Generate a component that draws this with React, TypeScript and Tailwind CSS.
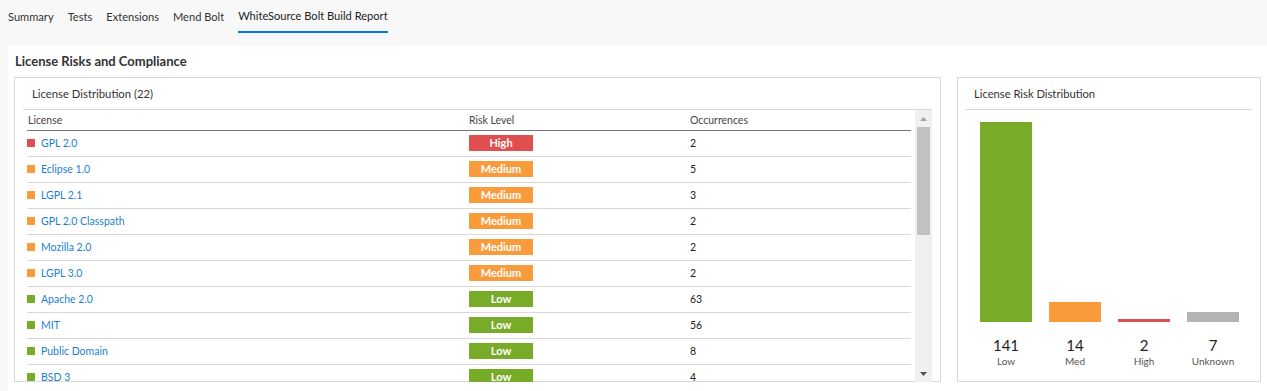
const rows = [
  { name: "GPL 2.0", risk: "High", count: 2 },
  { name: "Eclipse 1.0", risk: "Medium", count: 5 },
  { name: "LGPL 2.1", risk: "Medium", count: 3 },
  { name: "GPL 2.0 Classpath", risk: "Medium", count: 2 },
  { name: "Mozilla 2.0", risk: "Medium", count: 2 },
  { name: "LGPL 3.0", risk: "Medium", count: 2 },
  { name: "Apache 2.0", risk: "Low", count: 63 },
  { name: "MIT", risk: "Low", count: 56 },
  { name: "Public Domain", risk: "Low", count: 8 },
  { name: "BSD 3", risk: "Low", count: 4 },
];

const riskColor: Record<string, string> = {
  High: "bg-[#e04f4f]",
  Medium: "bg-[#f99b3a]",
  Low: "bg-[#78ac28]",
};

const bars = [
  { value: 141, label: "Low", h: "h-[200px]", color: "bg-[#78ac28]" },
  { value: 14, label: "Med", h: "h-[20px]", color: "bg-[#f99b3a]" },
  { value: 2, label: "High", h: "h-[3px]", color: "bg-[#e04f4f]" },
  { value: 7, label: "Unknown", h: "h-[10px]", color: "bg-[#b3b3b3]" },
];

const tabs = ["Summary", "Tests", "Extensions", "Mend Bolt", "WhiteSource Bolt Build Report"];

function LicenseTable() {
  return (
    <div className="flex h-[272px]">
      <div className="flex-1 overflow-hidden pl-[4px] pr-[4px]">
        <table className="w-[884px] border-collapse text-[10.5px]">
          <thead>
            <tr className="border-b border-[#767676] text-[#444] text-left">
              <th className="font-normal h-[20px] pt-[2px] pl-[1px] w-[442px]">License</th>
              <th className="font-normal pt-[2px] w-[221px]">Risk Level</th>
              <th className="font-normal pt-[2px]">Occurrences</th>
            </tr>
          </thead>
          <tbody>
            {rows.map((r) => (
              <tr key={r.name} className="border-b border-[#d8d8d8] h-[26px]">
                <td>
                  <div className="flex items-center">
                    <span className={`w-[8px] h-[8px] mr-[6px] ${riskColor[r.risk]}`}></span>
                    <span className="text-[#1a7fd1] pt-[1px]">{r.name}</span>
                  </div>
                </td>
                <td>
                  <div className={`w-[64px] h-[16px] flex items-center justify-center text-white font-bold text-[11px] ${riskColor[r.risk]}`}>
                    {r.risk}
                  </div>
                </td>
                <td className="text-[#222] pt-[1px]">{r.count}</td>
              </tr>
            ))}
          </tbody>
        </table>
      </div>
      <div className="w-[17px] bg-[#f0f0f0] flex flex-col items-center">
        <div className="h-[17px] flex items-center justify-center">
          <svg width="7" height="4" viewBox="0 0 7 4"><path d="M0 4 L3.5 0 L7 4 Z" fill="#a3a3a3" /></svg>
        </div>
        <div className="w-[13px] h-[108px] bg-[#c1c1c1]"></div>
        <div className="flex-1"></div>
        <div className="h-[17px] flex items-center justify-center">
          <svg width="7" height="4" viewBox="0 0 7 4"><path d="M0 0 L7 0 L3.5 4 Z" fill="#505050" /></svg>
        </div>
      </div>
    </div>
  );
}

function RiskChart() {
  return (
    <div className="pl-[22px] pt-[12px] flex gap-[17px]">
      {bars.map((b) => (
        <div key={b.label} className="w-[52px] flex flex-col items-center">
          <div className="h-[200px] w-full flex items-end">
            <div className={`w-full ${b.h} ${b.color}`}></div>
          </div>
          <div className="mt-[14px] text-[15px] leading-[18px] text-[#222]">{b.value}</div>
          <div className="text-[10px] leading-[14px] text-[#555]">{b.label}</div>
        </div>
      ))}
    </div>
  );
}

export default function App() {
  return (
    <div className="w-[1267px] h-[391px] bg-[#f8f8f8] overflow-hidden text-[#333]" style={{ fontFamily: 'Lato, "Open Sans", sans-serif' }}>
      <nav className="h-[46px] flex gap-[14px] pl-[8px] text-[11.1px]">
        {tabs.map((t, i) => (
          <div key={t} className={`h-[33px] flex items-center pt-[1px] ${i === 4 ? "border-b-2 border-[#0078d4] text-[#222]" : ""}`}>
            {t}
          </div>
        ))}
      </nav>
      <div className="ml-[8px] h-[345px] bg-white pl-[6px]">
        <h2 className="h-[31px] pt-[6px] pl-[1px] text-[13px] font-bold text-[#333]">License Risks and Compliance</h2>
        <div className="flex gap-[16px]">
          <div className="w-[927px] h-[305px] border border-[#d8d8d8] px-[8px]">
            <div className="h-[32px] border-b border-[#d8d8d8] pl-[9px] pt-[8px] text-[11.3px] text-[#333]">License Distribution (22)</div>
            <LicenseTable />
          </div>
          <div className="w-[304px] h-[305px] border border-[#d8d8d8]">
            <div className="mx-[8px] h-[32px] border-b border-[#d8d8d8] pl-[8px] pt-[8px] text-[11.2px] text-[#333]">License Risk Distribution</div>
            <RiskChart />
          </div>
        </div>
      </div>
    </div>
  );
}
